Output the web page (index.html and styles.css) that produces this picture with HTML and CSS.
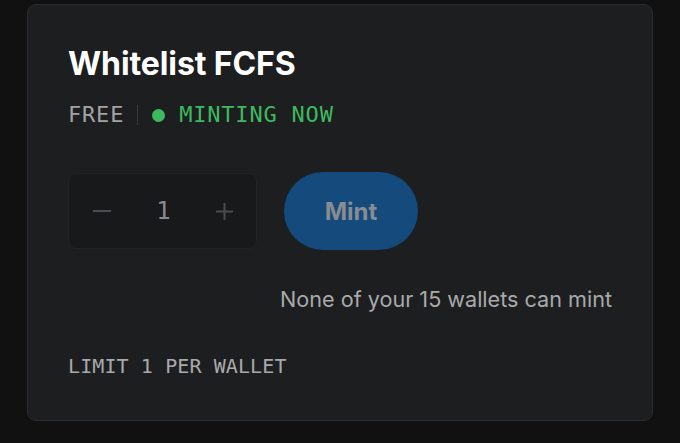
FILE: index.html
```html
<!DOCTYPE html>
<html>
<head>
<meta charset="utf-8">
<link rel="stylesheet" href="styles.css">
</head>
<body>
<div class="card">
  <h1 class="title">Whitelist FCFS</h1>
  <div class="status">
    <span class="price">FREE</span>
    <span class="sep"></span>
    <span class="dot"></span>
    <span class="live">MINTING NOW</span>
  </div>
  <div class="actions">
    <div class="stepper">
      <svg class="step" width="18" height="18" viewBox="0 0 18 18"><path d="M0 9H18" stroke="#4b4c4f" stroke-width="2"/></svg>
      <span class="qty">1</span>
      <svg class="step" width="17" height="17" viewBox="0 0 17 17"><path d="M0 8.5H17M8.5 0V17" stroke="#4b4c4f" stroke-width="2"/></svg>
    </div>
    <button class="mint">Mint</button>
  </div>
  <p class="note">None of your 15 wallets can mint</p>
  <p class="limit">LIMIT 1 PER WALLET</p>
</div>
</body>
</html>
```
FILE: styles.css
```css
html, body {
  margin: 0;
  background: #111112;
}
body {
  padding: 4px 27px 0 27px;
  font-family: Inter, "Noto Sans", sans-serif;
}
.card {
  width: 626px;
  height: 417px;
  box-sizing: border-box;
  background: #1d1e20;
  border: 1px solid #2a2b2e;
  border-radius: 9px;
  padding: 39px 40px 0 40px;
  display: flex;
  flex-direction: column;
}
.title {
  margin: 0;
  font-size: 32px;
  font-weight: 700;
  color: #ffffff;
  line-height: 40px;
  letter-spacing: -0.1px;
}
.status {
  margin-top: 18px;
  display: flex;
  align-items: center;
  font-family: "DejaVu Sans Mono", monospace;
  font-size: 22px;
  line-height: 26px;
  letter-spacing: 0.8px;
}
.price { color: #a3a3a3; }
.sep {
  width: 1px;
  height: 20px;
  background: #393a3d;
  margin: 0 14px 0 13px;
}
.dot {
  width: 13px;
  height: 13px;
  border-radius: 50%;
  background: #3dba5e;
  margin-right: 14px;
}
.live { color: #3dba5e; }
.actions {
  margin-top: 44px;
  display: flex;
  align-items: center;
  gap: 27px;
}
.stepper {
  width: 189px;
  height: 76px;
  box-sizing: border-box;
  background: #18191b;
  border: 1px solid #222326;
  border-radius: 8px;
  display: flex;
  align-items: center;
  justify-content: space-between;
  padding: 0 23px 0 24px;
}
.step {
  display: block;
}
.qty {
  color: #8a8b8e;
  font-size: 24px;
  line-height: 24px;
  font-family: "DejaVu Sans Mono", monospace;
}
.mint {
  width: 134px;
  height: 78px;
  border: none;
  border-radius: 39px;
  background: #144a7c;
  color: #898c90;
  font-family: Inter, sans-serif;
  font-size: 24px;
  font-weight: 700;
}
.note {
  margin: 36px 0 0 0;
  text-align: right;
  color: #a9a9aa;
  font-size: 21.6px;
  line-height: 26px;
}
.limit {
  margin: 42px 0 0 0;
  font-family: "DejaVu Sans Mono", monospace;
  color: #a9a9aa;
  font-size: 20px;
  line-height: 24px;
  letter-spacing: 0.1px;
}
```
